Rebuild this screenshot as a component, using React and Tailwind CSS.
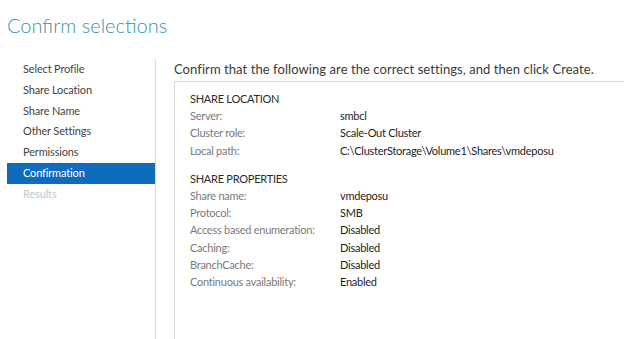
import React from "react";

const steps = [
  { label: "Select Profile" },
  { label: "Share Location" },
  { label: "Share Name" },
  { label: "Other Settings" },
  { label: "Permissions" },
  { label: "Confirmation", active: true },
  { label: "Results", disabled: true },
];

const sections = [
  {
    title: "SHARE LOCATION",
    rows: [
      ["Server:", "smbcl"],
      ["Cluster role:", "Scale-Out Cluster"],
      ["Local path:", "C:\\ClusterStorage\\Volume1\\Shares\\vmdeposu"],
    ],
  },
  {
    title: "SHARE PROPERTIES",
    rows: [
      ["Share name:", "vmdeposu"],
      ["Protocol:", "SMB"],
      ["Access based enumeration:", "Disabled"],
      ["Caching:", "Disabled"],
      ["BranchCache:", "Disabled"],
      ["Continuous availability:", "Enabled"],
    ],
  },
];

export default function App() {
  return (
    <div
      className="w-[624px] h-[339px] bg-white overflow-hidden flex flex-col whitespace-nowrap"
      style={{ fontFamily: 'Lato, "Open Sans", sans-serif' }}
    >
      <h1 className="h-[58px] pl-[7px] pt-[10px] text-[20px] leading-[30px] font-light text-[#3791b8]">
        Confirm selections
      </h1>

      <div className="flex flex-1 min-h-0">
        <nav className="w-[156px] shrink-0 border-r border-[#dcdcdc] pl-[7px] mt-px">
          {steps.map((s) => (
            <div
              key={s.label}
              className={
                "h-[20.8px] pl-4 text-[11px] tracking-[-0.15px] leading-[20.8px] " +
                (s.active
                  ? "bg-[#0f6cbd] text-white"
                  : s.disabled
                  ? "text-[#c6c6c6]"
                  : "text-[#444444]")
              }
            >
              {s.label}
            </div>
          ))}
        </nav>

        <main className="flex-1 min-w-0 flex flex-col pl-[18px]">
          <p className="h-[23px] pt-[1px] text-[13px] tracking-[0.07px] leading-[20px] text-[#3a3a3a]">
            Confirm that the following are the correct settings, and then click Create.
          </p>
          <div className="flex-1 border-l border-t border-[#d6d6d6] pl-[15px] pt-[8px] text-[11px] tracking-[-0.25px] leading-[17.2px]">
            {sections.map((sec, i) => (
              <div key={sec.title} className={i > 0 ? "mt-[11px]" : ""}>
                <div className="text-[#2b2b2b]">{sec.title}</div>
                {sec.rows.map(([k, v]) => (
                  <div key={k} className="flex">
                    <span className="w-[150px] shrink-0 text-[#7a7a7a]">{k}</span>
                    <span className="text-[#1e1e1e]">{v}</span>
                  </div>
                ))}
              </div>
            ))}
          </div>
        </main>
      </div>
    </div>
  );
}
